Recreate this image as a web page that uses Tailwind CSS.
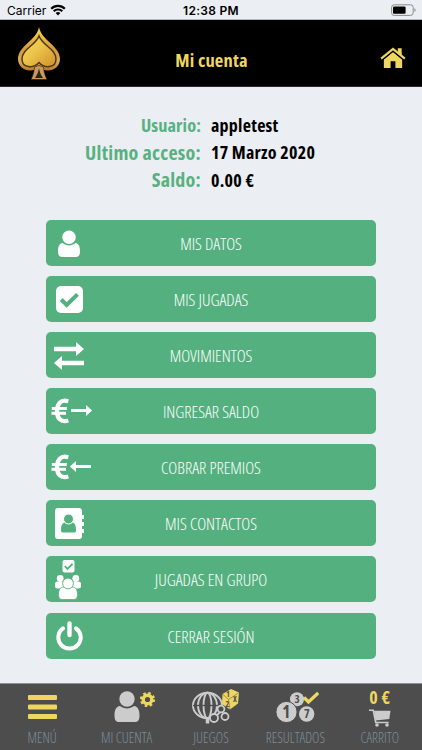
<!DOCTYPE html>
<html lang="es">
<head>
  <meta charset="UTF-8" />
  <meta name="viewport" content="width=device-width, initial-scale=1.0"/>
  <title>Mi cuenta</title>
  <script src="https://cdn.jsdelivr.net/npm/@tailwindcss/browser@4"></script>
</head>
<body class="bg-[#ebeef2] w-[422px] h-[750px] flex flex-col overflow-hidden font-['Open_Sans',sans-serif] font-stretch-condensed">

<!-- Status bar -->
<div class="h-[20px] shrink-0 flex items-center justify-between pl-[7px] pr-[5px] text-black font-['Inter',sans-serif] font-stretch-normal border-b border-[#b5b8bb]">
  <div class="flex items-center gap-[4px] w-[120px]">
    <span class="text-[12px] leading-[20px] pt-[2px]">Carrier</span>
    <svg class="w-[16px] h-[12px]" viewBox="0 0 16 12">
      <path d="M1.2 4.7a9.6 9.6 0 0 1 13.6 0M3.7 7.2a6.1 6.1 0 0 1 8.6 0" fill="none" stroke="#000" stroke-width="2.1"/>
      <path d="M5.6 9.1a3.4 3.4 0 0 1 4.8 0L8 11.5z"/>
    </svg>
  </div>
  <span class="text-[12px] leading-[20px] pt-[2px] pr-[2px] font-semibold tracking-[0.3px]">12:38 PM</span>
  <div class="w-[120px] flex justify-end">
    <svg class="w-[26px] h-[12px]" viewBox="0 0 26 12">
      <rect x=".6" y=".8" width="21.6" height="10.6" rx="2.6" fill="none" stroke="#8a8c8e"/>
      <rect x="2" y="2.4" width="12.6" height="7.4" rx="1.2"/>
      <path d="M23.4 4.2c1.6.6 1.6 3.2 0 3.8z" fill="#8a8c8e"/>
    </svg>
  </div>
</div>

<!-- Header -->
<header class="h-[67px] shrink-0 bg-black flex items-center justify-between pl-[17px] pr-[16px] border-b border-[#2b2b2b]">
  <svg class="w-[44px] h-[54px] mt-px" viewBox="0 0 44 54">
    <defs>
      <linearGradient id="gold" x1="0" y1="0" x2="1" y2="1">
        <stop offset="0" stop-color="#f6d860"/><stop offset=".45" stop-color="#edc44a"/><stop offset="1" stop-color="#cf8f2c"/>
      </linearGradient>
      <linearGradient id="rim" x1="0" y1="0" x2="0" y2="1">
        <stop offset="0" stop-color="#ffd84a"/><stop offset=".5" stop-color="#d69a3c"/><stop offset=".8" stop-color="#d9a95c"/><stop offset="1" stop-color="#b87a2a"/>
      </linearGradient>
    </defs>
    <path d="M22 0C24 13 43 19 43 32c0 7-6 11.500-12 11.500-4 0-7-1.500-9-3.500-2 2-5 3.500-9 3.500C7 43.500 1 39 1 32 1 19 20 13 22 0z" fill="url(#rim)"/>
    <path d="M17.500 40q4.500-3 9 0c.3 4.500 1.500 8.500 3.500 12.500H14c2-4 3.200-8 3.500-12.500z" fill="#c99a5a" stroke="#1c1408" stroke-width=".6"/>
    <path d="M22 41c.5 4 2 7 4 10h-8c2-3 3.500-6 4-10z" fill="#2e2412"/>
    <path d="M22 9C25 18 39 22 39 32c0 9-11 10-17 3.500C16 42 5 41 5 32c0-10 14-14 17-23z" fill="url(#gold)" stroke="#4a3a18" stroke-width="1.500"/>
  </svg>
  <h1 class="text-[#eed661] text-[18.500px] tracking-[0.15px] font-bold pt-[13px]">Mi cuenta</h1>
  <div class="w-[44px] flex justify-end pt-[10px]">
    <svg class="w-[26px] h-[22px]" viewBox="0 0 27 22" fill="#eed661">
      <path d="M13.500 4.800 23 12.600v8.900h-7v-7h-5v7H4v-8.900z"/>
      <path d="M18.500.8h4v8l-4-3.200z"/>
      <path d="M2.200 12.900 13.500 3.500l11.300 9.400" fill="none" stroke="#000" stroke-width="1.700"/>
      <path d="M1.200 11.600 13.500 1.500l12.300 10.100" fill="none" stroke="#eed661" stroke-width="2.300"/>
    </svg>
  </div>
</header>

<main class="flex-1 min-h-0">
  <!-- Account data -->
  <div class="grid grid-cols-[201px_1fr] gap-x-[10px] pt-[24px] font-bold tracking-[0.25px]">
    <div class="h-[28px] leading-[28px] text-right text-[#57b180] text-[18.300px] tracking-[0.1px]">Usuario:</div>
    <div class="h-[28px] leading-[28px] text-black text-[18px]">appletest</div>
    <div class="h-[27px] leading-[27px] text-right text-[#57b180] text-[20px]">Ultimo acceso:</div>
    <div class="h-[27px] leading-[27px] text-black text-[18px]">17 Marzo 2020</div>
    <div class="h-[28px] leading-[28px] text-right text-[#57b180] text-[20px]">Saldo:</div>
    <div class="h-[28px] leading-[28px] text-black text-[18px]">0.00 €</div>
  </div>

  <!-- Menu buttons -->
  <div class="pt-[26px] ml-[46px] w-[330px] flex flex-col gap-[10px] text-white text-[17px] font-light">
    <button class="relative h-[46px] rounded-[5px] bg-[#54b17f] pt-[2px]">
      <svg class="absolute left-[11px] top-[10px] w-[24px] h-[28px]" viewBox="0 0 24 28" fill="#fff">
        <path d="M5.500 13C2 13.500 1 17 1 21.500 1 25 2.500 27 5 27h14c2.500 0 4-2 4-5.500 0-4.500-1-8-4.500-8.500-4 3.200-9 3.200-13 0z"/>
        <circle cx="12" cy="7.300" r="6.700"/>
      </svg>
      MIS DATOS
    </button>
    <button class="relative h-[46px] rounded-[5px] bg-[#54b17f] pt-[2px]">
      <svg class="absolute left-[10px] top-[10px] w-[27px] h-[27px]" viewBox="0 0 27 27">
        <rect width="27" height="27" rx="5" fill="#fff"/>
        <path d="m5.200 13.500 5.500 5.500L21.500 8.300" fill="none" stroke="#54b17f" stroke-width="4"/>
      </svg>
      MIS JUGADAS
    </button>
    <button class="relative h-[46px] rounded-[5px] bg-[#54b17f] pt-[2px]">
      <svg class="absolute left-[8px] top-[10px] w-[30px] h-[28px]" viewBox="0 0 30 28" fill="#fff">
        <path d="M0 4.800h22V0l8 7-8 7V9.200H0zM30 18.800H8V14l-8 7 8 7v-4.800h22z"/>
      </svg>
      MOVIMIENTOS
    </button>
    <button class="relative h-[46px] rounded-[5px] bg-[#54b17f] pt-[2px]">
      <svg class="absolute left-[5px] top-[10px] w-[42px] h-[26px]" viewBox="0 0 42 26">
        <path d="M17.300 3.200C9.500 1 6 6 6 13s3.500 12 11.300 9.500" fill="none" stroke="#fff" stroke-width="4.300"/>
        <path d="M.8 10.500h15M.5 15.300h14.500" fill="none" stroke="#fff" stroke-width="2.900"/>
        <path d="M20 11h15V7l6 5.500-6 5.500v-4H20z" fill="#fff"/>
      </svg>
      INGRESAR SALDO
    </button>
    <button class="relative h-[46px] rounded-[5px] bg-[#54b17f] pt-[2px]">
      <svg class="absolute left-[5px] top-[10px] w-[42px] h-[26px]" viewBox="0 0 42 26">
        <path d="M17.300 3.200C9.500 1 6 6 6 13s3.500 12 11.300 9.500" fill="none" stroke="#fff" stroke-width="4.300"/>
        <path d="M.8 10.500h15M.5 15.300h14.500" fill="none" stroke="#fff" stroke-width="2.900"/>
        <path d="M40 11H25V7l-6 5.500 6 5.500v-4h15z" fill="#fff"/>
      </svg>
      COBRAR PREMIOS
    </button>
    <button class="relative h-[46px] rounded-[5px] bg-[#54b17f] pt-[2px]">
      <svg class="absolute left-[9px] top-[8px] w-[30px] h-[31px]" viewBox="0 0 30 31">
        <path d="M3 0h21q3 0 3 3v4h2v4h-2v3h2v4h-2v3h2v4h-2v3q0 3-3 3H3q-3 0-3-3V3q0-3 3-3z" fill="#fff"/>
        <path d="M9.500 14.500c-3 1-3.500 4-3.500 8 0 1.500 1 2 2 2h11c1 0 2-.5 2-2 0-4-.5-7-3.500-8-2.500 2-5.500 2-8 0z" fill="#54b17f"/>
        <circle cx="13.500" cy="11" r="5" fill="#54b17f" stroke="#fff"/>
      </svg>
      MIS CONTACTOS
    </button>
    <button class="relative h-[46px] rounded-[5px] bg-[#54b17f] pt-[2px]">
      <svg class="absolute left-[9px] top-[4px] w-[26px] h-[40px]" viewBox="0 0 26 40" fill="#fff">
        <rect x="7.500" width="12" height="12.500" rx="2"/>
        <path d="m9.800 6.200 2.700 2.700 5-5" fill="none" stroke="#54b17f" stroke-width="1.900"/>
        <circle cx="5.200" cy="18.500" r="3.400"/><circle cx="20.800" cy="18.500" r="3.400"/>
        <rect y="21.500" width="9" height="7" rx="2.500"/><rect x="17" y="21.500" width="9" height="7" rx="2.500"/>
        <path d="M8 27c-3 .5-4.500 3-4.500 8 0 3 1.500 4.500 4 4.500h11c2.500 0 4-1.500 4-4.500 0-5-1.500-7.500-4.500-8z" stroke="#54b17f" stroke-width=".8"/>
        <circle cx="13" cy="23.500" r="5.400" stroke="#54b17f" stroke-width=".9"/>
      </svg>
      JUGADAS EN GRUPO
    </button>
    <button class="relative h-[46px] rounded-[5px] bg-[#54b17f] pt-[2px] mt-px">
      <svg class="absolute left-[10px] top-[8px] w-[27px] h-[30px]" viewBox="0 0 27 30" fill="none" stroke="#fff" stroke-linecap="round">
        <path d="M7 7.300a11.200 11.200 0 1 0 13 0" stroke-width="4"/>
        <path d="M13.500 2.500v11.500" stroke-width="4.400"/>
      </svg>
      CERRAR SESIÓN
    </button>
  </div>
</main>

<!-- Bottom navigation -->
<nav class="h-[67px] shrink-0 bg-[#4d4d4d] border-t border-[#8d8f91] grid grid-cols-5 text-center text-[#7d8d98] text-[14px] font-light">
  <a class="flex flex-col items-center">
    <svg class="w-[29px] h-[42px]" viewBox="0 0 29 42" fill="#eed661">
      <rect y="11" width="29" height="5" rx="1"/><rect y="20.500" width="29" height="5" rx="1"/><rect y="30" width="29" height="5" rx="1"/>
    </svg>
    <span class="leading-[24px]">MENÚ</span>
  </a>
  <a class="flex flex-col items-center">
    <svg class="w-[42px] h-[42px] ml-[17px]" viewBox="0 0 42 42" fill="#ccc">
      <path d="M6 22c-4 .5-5.500 4-5.500 9.500C.5 36 2 38 5 38h16c3 0 4.500-2 4.500-6.500 0-5.500-1.500-9-5.500-9.500-4 3.200-10 3.200-14 0z"/>
      <circle cx="13" cy="15" r="7.700"/>
      <circle cx="33.500" cy="15.500" r="4.300" fill="none" stroke="#eed661" stroke-width="3.400"/>
      <circle cx="33.500" cy="15.500" r="6.400" fill="none" stroke="#eed661" stroke-width="2.400" stroke-dasharray="2.510"/>
    </svg>
    <span class="leading-[24px]">MI CUENTA</span>
  </a>
  <a class="flex flex-col items-center">
    <!-- Lottery drum with balls and a die -->
    <svg class="w-[56px] h-[42px] ml-[7px]" viewBox="0 0 56 42">
      <g fill="none" stroke="#ccc" stroke-width="1.900">
        <ellipse cx="21.500" cy="21.500" rx="14.500" ry="12.800"/><ellipse cx="21.500" cy="21.500" rx="9.500" ry="12.800"/><ellipse cx="21.500" cy="21.500" rx="4" ry="12.800"/>
        <path d="M21.500 34v5.500" stroke-width="3.500"/>
      </g>
      <path d="M7 21.500h29" stroke="#4d4d4d" stroke-width="1.300"/>
      <g fill="#4d4d4d" stroke="#ccc" stroke-width="1.800">
        <circle cx="35" cy="25" r="3.400"/><circle cx="28" cy="34" r="4"/><circle cx="39" cy="32.500" r="3.500"/>
      </g>
      <path d="m45 5 8 3.500-1 11-8 6-8-5.500.5-10z" fill="#eed661"/>
      <path d="m36.500 10 6 5.500 10-6.500M42.500 15.500 44 25" fill="none" stroke="#4d4d4d" stroke-width=".5"/>
      <g fill="#4d4d4d" class="text-[8px] font-bold">
        <text x="40" y="12.500">1</text><text x="39.500" y="22.500">2</text><text x="47" y="17.500">X</text>
      </g>
    </svg>
    <span class="leading-[24px]">JUEGOS</span>
  </a>
  <a class="flex flex-col items-center">
    <!-- Numbered balls with a check mark -->
    <svg class="w-[44px] h-[42px] ml-[3px]" viewBox="0 0 44 42">
      <g fill="#ccc">
        <circle cx="22" cy="15.200" r="7"/>
        <circle cx="11.500" cy="28" r="10.600" stroke="#4d4d4d" stroke-width="1"/>
        <circle cx="31.700" cy="30" r="7.700"/>
      </g>
      <path d="m29 13.500 4.500 4.500 9.700-9" fill="none" stroke="#eed661" stroke-width="3.400"/>
      <g fill="#4d4d4d" text-anchor="middle" class="font-bold">
        <text x="11.300" y="34.200" class="text-[17px]">1</text>
        <text x="22.200" y="19.200" class="text-[11px]">3</text>
        <text x="31.700" y="34.300" class="text-[12px]">7</text>
      </g>
    </svg>
    <span class="leading-[24px]">RESULTADOS</span>
  </a>
  <a class="flex flex-col items-center">
    <span class="h-[25px] text-[#eed661] text-[18px] tracking-[0.3px] font-bold leading-[27px]">0 €</span>
    <svg class="w-[22px] h-[18px]" viewBox="0 0 22 18" fill="#ccc">
      <path d="M0 1.200h4.200l2.500 12.300h13" fill="none" stroke="#ccc" stroke-width="1.600"/>
      <path d="M5 1.800h16.500l-1.200 8.200L6.500 11.500z"/>
      <circle cx="8" cy="16" r="1.800"/><circle cx="18" cy="16" r="1.800"/>
    </svg>
    <span class="leading-[21px]">CARRITO</span>
  </a>
</nav>

</body>
</html>
